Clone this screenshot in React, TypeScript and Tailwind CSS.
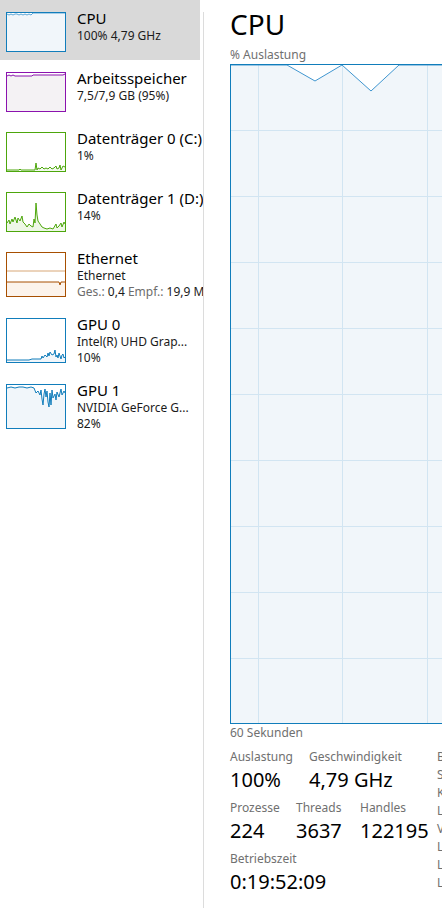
import type { ReactNode } from 'react';

type Item = {
  title: string;
  lines: ReactNode[];
  tall?: boolean;
  selected?: boolean;
  border: string;
  graph: ReactNode;
};

// polyline helpers for the small preview graphs
function Spark({
  points,
  h,
  stroke,
  fill,
}: {
  points: string;
  h: number;
  stroke: string;
  fill?: string;
}) {
  const pts = points.trim().split(/\s+/);
  const first = pts[0].split(',')[0];
  const last = pts[pts.length - 1].split(',')[0];
  const area = `${first},${h} ${points} ${last},${h}`;
  return (
    <svg width="58" height={h} viewBox={`0 0 58 ${h}`} className="block">
      {fill && <polygon points={area} fill={fill} />}
      <polyline points={points} fill="none" stroke={stroke} strokeWidth="1" />
    </svg>
  );
}

const items: Item[] = [
  {
    title: 'CPU',
    lines: ['100% 4,79 GHz'],
    selected: true,
    border: 'border-[#117dbb]',
    graph: (
      <Spark
        h={38}
        stroke="#5aa5d6"
        fill="#f1f6fa"
        points="0,1 2,2 4,1 6,2 8,1 10,1 12,2 14,1 16,2 18,1 20,2 22,1 24,2 26,0 58,0"
      />
    ),
  },
  {
    title: 'Arbeitsspeicher',
    lines: ['7,5/7,9 GB (95%)'],
    border: 'border-[#8b12ae]',
    graph: (
      <Spark
        h={38}
        stroke="#8b12ae"
        fill="#f4f2f4"
        points="0,3 2,2 4,3 6,2 8,3 25,3 26,2 56,2 58,1"
      />
    ),
  },
  {
    title: 'Datenträger 0 (C:)',
    lines: ['1%'],
    border: 'border-[#4da60c]',
    graph: (
      <Spark
        h={38}
        stroke="#4da60c"
        fill="#f3f9ee"
        points="0,37 12,37 13,36 14,37 28,37 29,30 30,37 31,35 33,36 35,34 37,36 39,35 41,36 43,34 45,36 47,35 49,33 50,36 52,35 53,32 54,37 56,33 58,34"
      />
    ),
  },
  {
    title: 'Datenträger 1 (D:)',
    lines: ['14%'],
    border: 'border-[#4da60c]',
    graph: (
      <Spark
        h={38}
        stroke="#4da60c"
        fill="#eef7e6"
        points="0,30 2,27 3,31 5,26 6,29 8,24 10,30 11,25 13,28 15,23 16,29 18,31 20,34 22,31 24,33 26,34 27,26 28,30 29,10 30,22 31,28 33,31 35,34 37,35 40,36 43,35 46,36 49,31 50,35 52,33 54,30 55,34 57,29 58,31"
      />
    ),
  },
  {
    title: 'Ethernet',
    tall: true,
    lines: [
      'Ethernet',
      <>
        <span className="text-[#6d6d6d]">Ges.:</span> 0,4{' '}
        <span className="text-[#6d6d6d]">Empf.:</span> 19,9 MBit/s
      </>,
    ],
    border: 'border-[#a74f01]',
    graph: (
      <svg width="58" height="43" viewBox="0 0 58 43" className="block">
        <polygon points="0,29 52,29 53,32 54,29 58,29 58,43 0,43" fill="#fcf3eb" />
        <line x1="0" y1="18" x2="58" y2="18" stroke="#d8a777" strokeWidth="1" />
        <polyline
          points="0,29 52,29 53,32 54,29 58,29"
          fill="none"
          stroke="#a74f01"
          strokeWidth="1"
        />
      </svg>
    ),
  },
  {
    title: 'GPU 0',
    tall: true,
    lines: ['Intel(R) UHD Grap...', '10%'],
    border: 'border-[#117dbb]',
    graph: (
      <Spark
        h={43}
        stroke="#117dbb"
        fill="#f1f6fa"
        points="0,41 22,41 25,40 34,40 35,37 36,39 38,36 40,38 41,34 42,37 43,33 45,36 47,35 48,31 49,38 50,36 51,39 52,34 53,37 54,40 55,36 56,35 57,39 58,38"
      />
    ),
  },
  {
    title: 'GPU 1',
    tall: true,
    lines: ['NVIDIA GeForce G...', '82%'],
    border: 'border-[#117dbb]',
    graph: (
      <Spark
        h={43}
        stroke="#117dbb"
        fill="#f1f6fa"
        points="0,3 4,2 8,3 12,2 16,2 20,3 24,2 27,3 29,8 31,6 33,10 34,5 35,14 36,20 37,9 38,4 39,12 40,6 41,17 42,22 43,8 44,20 45,5 46,13 48,9 49,15 50,7 52,12 54,4 55,10 57,6 58,8"
      />
    ),
  },
];

function SideItem({ item }: { item: Item }) {
  return (
    <div
      className={`flex w-[200px] pl-[6px] pt-2 ${item.tall ? 'h-[66px]' : 'h-[60px]'} ${
        item.selected ? 'bg-[#d9d9d9]' : ''
      }`}
    >
      <div
        className={`mt-1 w-[60px] shrink-0 border bg-white ${item.border} ${
          item.tall ? 'h-[45px]' : 'h-[40px]'
        }`}
      >
        {item.graph}
      </div>
      <div className="ml-[11px] whitespace-nowrap">
        <div className="text-[15px] leading-[20px] text-black">{item.title}</div>
        {item.lines.map((l, i) => (
          <div key={i} className="text-[12px] leading-[16px] text-[#1b1b1b]">
            {l}
          </div>
        ))}
      </div>
    </div>
  );
}

function CpuChart() {
  const w = 298;
  const h = 658;
  const rows = [65, 131, 197, 263, 329, 395, 461, 527, 593];
  const cols = [27, 111, 196, 280];
  const line = '0,0 56,0 84,16 111,0 140,26 168,0 298,0';
  return (
    <div className="h-[660px] w-[300px] shrink-0 border border-[#117dbb] bg-white">
      <svg width={w} height={h} viewBox={`0 0 ${w} ${h}`} className="block">
        <polygon points={`${line} ${w},${h} 0,${h}`} fill="#f1f6fa" />
        {rows.map((y) => (
          <line
            key={y}
            x1="0"
            y1={y + 0.5}
            x2={w}
            y2={y + 0.5}
            stroke="#d2e5f2"
            strokeWidth="1"
          />
        ))}
        {cols.map((x) => (
          <line
            key={x}
            x1={x + 0.5}
            y1="0"
            x2={x + 0.5}
            y2={h}
            stroke="#d2e5f2"
            strokeWidth="1"
          />
        ))}
        <polyline points={line} fill="none" stroke="#3f95cf" strokeWidth="1" />
      </svg>
    </div>
  );
}

function Stat({ label, value, w }: { label: string; value: string; w: string }) {
  return (
    <div className={w}>
      <div className="text-[12px] leading-[16px] text-[#707070]">{label}</div>
      <div className="mt-[2px] text-[20px] leading-[26px] text-black">{value}</div>
    </div>
  );
}

const specs = [
  'Basisgeschwindigkeit:',
  'Sockets:',
  'Kerne:',
  'Logische Prozessoren:',
  'Virtualisierung:',
  'L1-Cache:',
  'L2-Cache:',
  'L3-Cache:',
];

export default function App() {
  return (
    <div className="flex h-[912px] w-full overflow-hidden bg-white font-['Segoe_UI','Noto_Sans',sans-serif]">
      <div className="w-[203px] shrink-0 overflow-hidden">
        {items.map((it) => (
          <SideItem key={it.title} item={it} />
        ))}
      </div>
      <div className="mt-3 mb-[4px] w-px shrink-0 bg-[#dcdcdc]" />

      <div className="min-w-0 flex-1 overflow-hidden pl-[26px]">
        <div className="mt-[5px] h-[38px] text-[28px] leading-[38px] text-black">CPU</div>
        <div className="mt-[4px] text-[12px] leading-[16px] text-[#707070]">% Auslastung</div>
        <div className="mt-px">
          <CpuChart />
        </div>
        <div className="mt-px text-[12px] leading-[16px] text-[#707070]">60 Sekunden</div>

        <div className="mt-[8px] flex whitespace-nowrap">
          <div className="w-[207px] shrink-0">
            <div className="flex">
              <Stat label="Auslastung" value="100%" w="w-[79px]" />
              <Stat label="Geschwindigkeit" value="4,79 GHz" w="w-[128px]" />
            </div>
            <div className="mt-[7px] flex">
              <Stat label="Prozesse" value="224" w="w-[66px]" />
              <Stat label="Threads" value="3637" w="w-[64px]" />
              <Stat label="Handles" value="122195" w="w-[77px]" />
            </div>
            <div className="mt-[7px] flex">
              <Stat label="Betriebszeit" value="0:19:52:09" w="w-[150px]" />
            </div>
          </div>
          <div className="-mt-px">
            {specs.map((s) => (
              <div key={s} className="text-[12px] leading-[18px] text-[#707070]">
                {s}
              </div>
            ))}
          </div>
        </div>
      </div>
    </div>
  );
}
